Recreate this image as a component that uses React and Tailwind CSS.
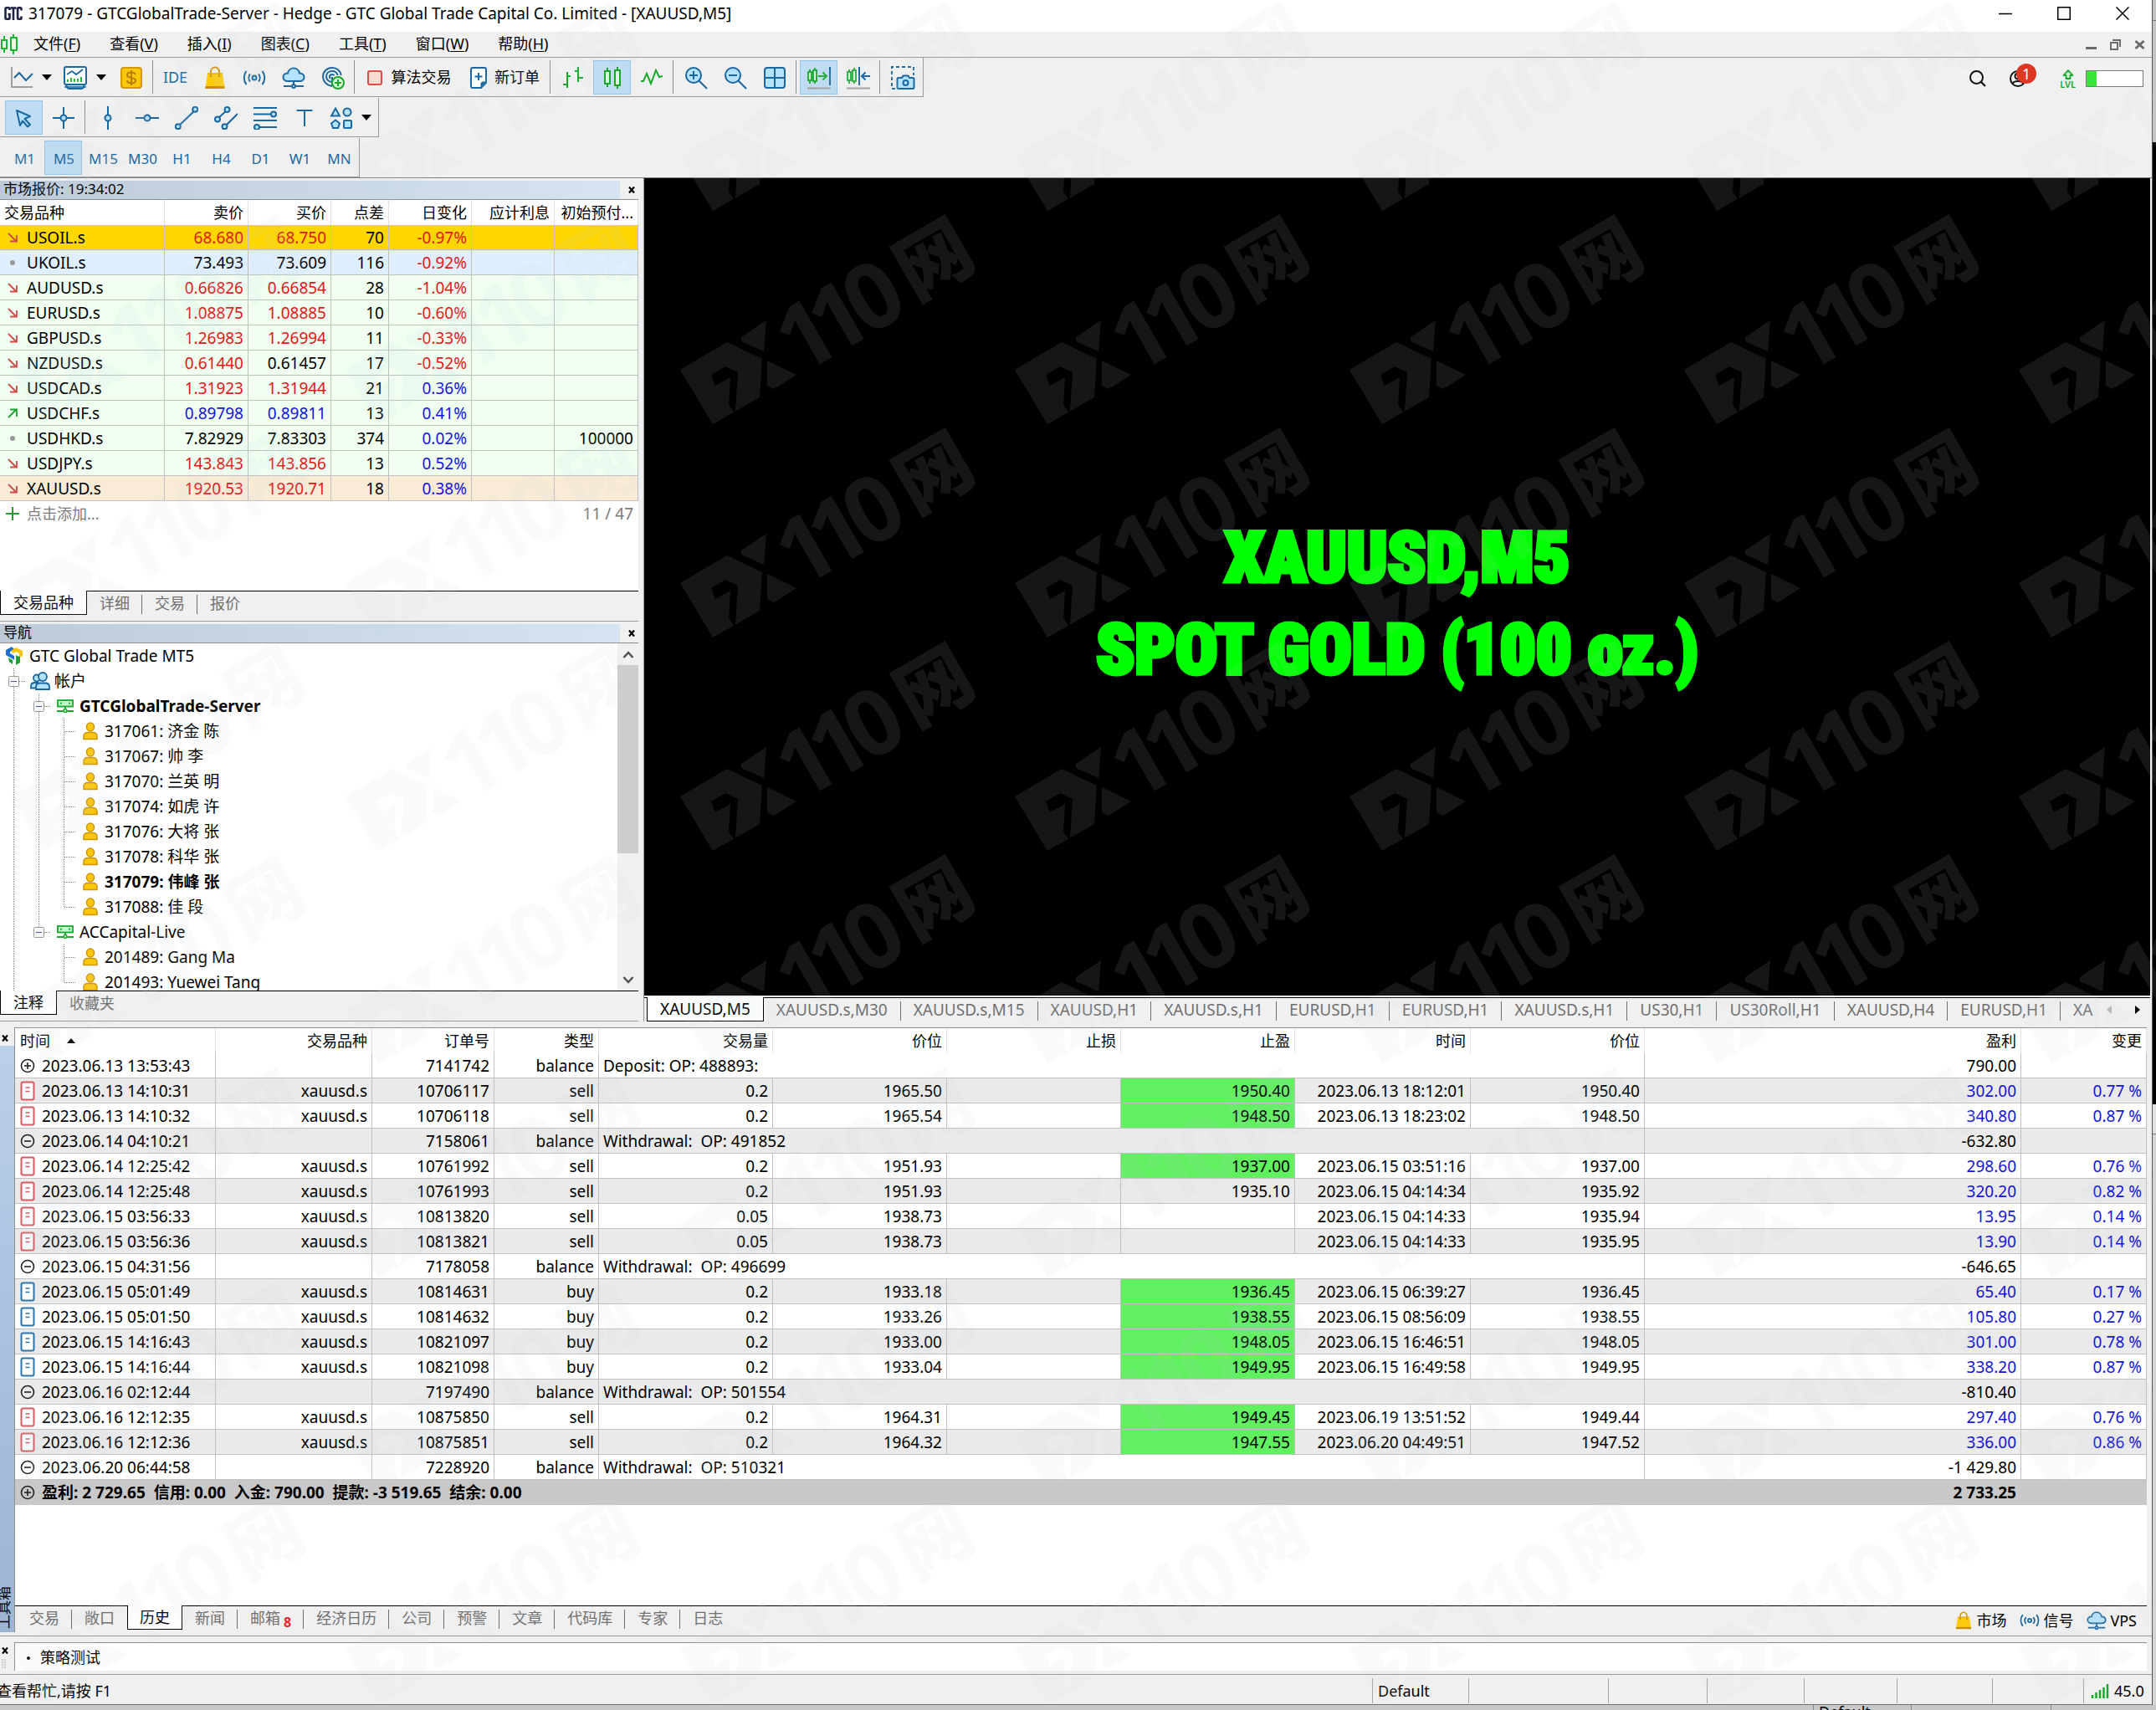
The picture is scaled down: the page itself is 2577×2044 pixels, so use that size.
import React from "react";

const BLUE = "#1b679f";
const SKY = "#b5e2ff";
const GREEN = "#17a82b";

/* ---------- icons ---------- */

function Svg({ w = 28, h = 28, children, className = "" }) {
  return (
    <svg width={w} height={h} viewBox={`0 0 ${w} ${h}`} fill="none" className={`shrink-0 ${className}`} aria-hidden="true">
      {children}
    </svg>
  );
}

const CaretDown = () => (
  <Svg w={12} h={7}><path d="M0 0h12L6 7z" fill="#000" /></Svg>
);

const LineChartIcon = () => (
  <Svg>
    <path d="M2 1v24h25" stroke="#a0a0a0" strokeWidth="2" />
    <path d="M5 14l6-6 8 9 8-8" stroke={BLUE} strokeWidth="2" />
  </Svg>
);

const IndicatorIcon = () => (
  <Svg w={30} h={30}>
    <path d="M3 20l2 6c.5 1.500 1.500 2 3 2h14c1.500 0 2.500-.5 3-2l2-6z" fill={SKY} stroke={BLUE} strokeWidth="2" />
    <rect x="2" y="2" width="26" height="21" rx="2" fill="#fff" stroke={BLUE} strokeWidth="2" />
    <path d="M2 26h26" stroke={BLUE} strokeWidth="1.500" />
    <path d="M5 11l6-4 5 4 8-6" stroke={BLUE} strokeWidth="1.800" />
    <path d="M6 20v-3M10 20v-5M14 20v-4M18 20v-4M22 20v-6" stroke={GREEN} strokeWidth="1.800" />
  </Svg>
);

const DollarIcon = () => (
  <Svg>
    <rect x="2" y="2" width="24" height="24" rx="3" fill="#fbc70b" stroke="#d39a08" strokeWidth="2" />
    <path d="M14 5v18M19 10c-1-2-3-2.500-5-2.500-3 0-5 1-5 3.200 0 4.600 10 2 10 6.600 0 2.200-2 3.200-5 3.200-2.500 0-4.500-1-5.500-3" stroke="#b97d06" strokeWidth="2" />
  </Svg>
);

const BagIcon = ({ w = 28, h = 28 }) => (
  <svg width={w} height={h} viewBox="0 0 28 28" fill="none" aria-hidden="true" className="shrink-0">
    <path d="M5 9h18l2.500 17h-23z" fill="#fccb0a" />
    <path d="M2.500 24h23v3h-23z" fill="#c98c05" />
    <path d="M9 13V7c0-3 2-5.500 5-5.500S19 4 19 7v6" stroke="#cf9408" strokeWidth="2" />
    <path d="M5 9h18" stroke="#e0a90a" strokeWidth="1.500" />
  </svg>
);

const SignalIcon = ({ w = 28, h = 28 }) => (
  <svg width={w} height={h} viewBox="0 0 28 28" fill="none" aria-hidden="true" className="shrink-0" stroke={BLUE} strokeWidth="2">
    <circle cx="14" cy="14" r="2.500" fill={SKY} />
    <path d="M9 9.500c-2.200 2.600-2.200 6.400 0 9M19 9.500c2.200 2.600 2.200 6.400 0 9" />
    <path d="M4.500 6C.8 10.500.8 17.500 4.500 22M23.500 6c3.700 4.500 3.700 11.500 0 16" />
  </svg>
);

const CloudIcon = ({ w = 28, h = 28 }) => (
  <svg width={w} height={h} viewBox="0 0 28 28" fill="none" aria-hidden="true" className="shrink-0" stroke={BLUE} strokeWidth="2">
    <path d="M7 18c-3 0-5.500-2-5.500-4.800C1.500 10.500 4 8.500 7 8.500 7.500 5 10.500 2.500 14 2.500S20.500 5 21 8.500c3 0 5.500 2 5.500 4.700 0 2.800-2.500 4.800-5.500 4.800z" fill={SKY} />
    <path d="M14 18v4M2 24h9M17 24h9" />
    <circle cx="14" cy="24" r="2" fill={SKY} />
  </svg>
);

const CopyTradeIcon = () => (
  <Svg>
    <g stroke={BLUE} strokeWidth="2">
      <path d="M13 24C6 23 2 18 2 12.500 2 6.500 7 2 13 2c5.500 0 10 3.800 10.800 9" />
      <path d="M12 19c-3.500-.8-6-3.500-6-6.700C6 8.500 9 6 13 6c3 0 5.800 1.800 6.700 5" />
      <path d="M11 15c-.7-.6-1-1.400-1-2.500C10 11 11.300 10 13 10c1 0 2 .5 2.500 1.300" />
      <path d="M13 13v11" />
    </g>
    <circle cx="20" cy="20" r="7" fill="#d6fbd6" stroke={GREEN} strokeWidth="2" />
    <path d="M20 16v8M16 20h8" stroke={GREEN} strokeWidth="2" />
  </Svg>
);

const StopSquareIcon = () => (
  <Svg w={18} h={18}>
    <rect x="1" y="1" width="16" height="16" rx="2" fill="#fbd9d2" stroke="#d94d4f" strokeWidth="2" />
  </Svg>
);

const NewOrderIcon = () => (
  <Svg w={22} h={28}>
    <path d="M4 2h14c1 0 2 1 2 2v16l-6 6H4c-1 0-2-1-2-2V4c0-1 1-2 2-2z" fill="#fff" stroke={BLUE} strokeWidth="2" />
    <path d="M20 19l-6 7v-5c0-1 1-2 2-2z" fill={BLUE} stroke={BLUE} />
    <path d="M11 8v9M6.500 12.500h9" stroke={BLUE} strokeWidth="2" />
  </Svg>
);

const BarChartIcon = () => (
  <Svg>
    <path d="M7 7v19M2 22h5M7 12h4M20 1v18M16 6h4M20 14h6" stroke={GREEN} strokeWidth="2" />
  </Svg>
);

const CandlesIcon = () => (
  <Svg>
    <g stroke={GREEN} strokeWidth="2" fill="#d9fbe0">
      <path d="M8 2v4M8 21v4M20 1v4M20 23v4" />
      <rect x="5" y="6" width="6" height="15" />
      <rect x="17" y="5" width="6" height="18" />
    </g>
  </Svg>
);

const ZigzagIcon = () => (
  <Svg><path d="M1 18h3l4-9 5 12 6-16 4 8 4-1" stroke={GREEN} strokeWidth="2" /></Svg>
);

const ZoomIcon = ({ plus }) => (
  <Svg>
    <circle cx="11" cy="11" r="9" fill={SKY} stroke={BLUE} strokeWidth="2" />
    <path d="M17.500 17.500L27 27M6 11h10" stroke={BLUE} strokeWidth="2" />
    {plus && <path d="M11 6v10" stroke={BLUE} strokeWidth="2" />}
  </Svg>
);

const TileIcon = () => (
  <Svg>
    <rect x="2" y="2" width="24" height="24" rx="3" fill={SKY} stroke={BLUE} strokeWidth="2" />
    <path d="M14 2v24M2 14h24" stroke={BLUE} strokeWidth="2" />
  </Svg>
);

const SmallCandles = () => (
  <g stroke={GREEN} strokeWidth="1.800" fill="#d9fbe0">
    <path d="M4 4v3M4 17v4M10 2v3M10 18v3" />
    <rect x="2" y="7" width="4" height="10" />
    <rect x="8" y="5" width="4" height="13" />
  </g>
);

const AutoScrollIcon = () => (
  <Svg w={30}>
    <SmallCandles />
    <path d="M14 12h10M19.500 7.500L24 12l-4.500 4.500" stroke={GREEN} strokeWidth="2" />
    <path d="M28 1v22" stroke={BLUE} strokeWidth="2" />
    <path d="M1 26.500h28" stroke="#a0a0a0" strokeWidth="2" />
  </Svg>
);

const ChartShiftIcon = () => (
  <Svg w={30}>
    <SmallCandles />
    <path d="M16 1v22M19 12h10M23.500 7.500L19 12l4.500 4.500" stroke={BLUE} strokeWidth="2" />
    <path d="M1 26.500h28" stroke="#a0a0a0" strokeWidth="2" />
  </Svg>
);

const CameraIcon = () => (
  <Svg w={30} h={30}>
    <path d="M6 28H2V2h26v10" stroke={BLUE} strokeWidth="2" strokeDasharray="4 3" />
    <path d="M10 15h4l1.500-2.500h6L23 15h4c1 0 1.500.5 1.500 1.500v10c0 1-.5 1.500-1.500 1.500H10c-1 0-1.500-.5-1.500-1.500v-10c0-1 .5-1.500 1.500-1.500z" fill={SKY} stroke={BLUE} strokeWidth="2" />
    <circle cx="18.500" cy="21" r="3" fill={SKY} stroke={BLUE} strokeWidth="2" />
  </Svg>
);

const CursorIcon = () => (
  <Svg>
    <path d="M5 5l16 7-6.500 3 6.500 7-3 2.500-6-7-3 5.500z" fill={SKY} stroke={BLUE} strokeWidth="2" strokeLinejoin="round" />
  </Svg>
);

const CrosshairIcon = () => (
  <Svg>
    <path d="M14 1v26M1 14h26" stroke={BLUE} strokeWidth="2" />
    <circle cx="14" cy="14" r="3.500" fill={SKY} stroke={BLUE} strokeWidth="2" />
  </Svg>
);

const VLineIcon = () => (
  <Svg>
    <path d="M14 0v28" stroke={BLUE} strokeWidth="2" />
    <circle cx="14" cy="14" r="3.500" fill={SKY} stroke={BLUE} strokeWidth="2" />
  </Svg>
);

const HLineIcon = () => (
  <Svg>
    <path d="M0 14h28" stroke={BLUE} strokeWidth="2" />
    <circle cx="14" cy="14" r="3.500" fill={SKY} stroke={BLUE} strokeWidth="2" />
  </Svg>
);

const TrendIcon = () => (
  <Svg>
    <path d="M4 24L25 4" stroke={BLUE} strokeWidth="2" />
    <circle cx="3.800" cy="24.200" r="3" fill={SKY} stroke={BLUE} strokeWidth="2" />
    <circle cx="24.200" cy="3.800" r="3" fill={SKY} stroke={BLUE} strokeWidth="2" />
  </Svg>
);

const ChannelIcon = () => (
  <Svg>
    <path d="M4 15L16 4M13 24L28 9" stroke={BLUE} strokeWidth="2" />
    <g fill={SKY} stroke={BLUE} strokeWidth="2">
      <circle cx="4" cy="15.500" r="3" />
      <circle cx="15.500" cy="4" r="3" />
      <circle cx="12.500" cy="24.200" r="3" />
    </g>
  </Svg>
);

const FiboIcon = () => (
  <Svg w={30}>
    <path d="M1 2h28M1 9.500h28M1 17h28M1 25h28" stroke={BLUE} strokeWidth="2" />
    <circle cx="25" cy="9.500" r="3" fill={SKY} stroke={BLUE} strokeWidth="2" />
    <circle cx="5" cy="25" r="3" fill={SKY} stroke={BLUE} strokeWidth="2" />
  </Svg>
);

const TextToolIcon = () => (
  <Svg><path d="M4.500 5h19M14 5v19" stroke={BLUE} strokeWidth="2" /></Svg>
);

const ShapesIcon = () => (
  <Svg>
    <g fill={SKY} stroke={BLUE} strokeWidth="2">
      <path d="M7 2.500L12 11.500H2z" />
      <circle cx="21" cy="7" r="4.500" />
      <path d="M7 16.500l5 4-2 5.500H4l-2-5.500z" />
      <rect x="17" y="17" width="9" height="9" rx="1" />
    </g>
  </Svg>
);

const TrendArrow = ({ dir }) => {
  if (dir === "flat") return <Svg w={12} h={12}><circle cx="6" cy="6" r="3" fill="#9a9a9a" /></Svg>;
  const up = dir === "up";
  return (
    <Svg w={12} h={12}>
      <path
        d={up ? "M1 11L10 2M3 1.500h8V10" : "M1 1L10 10M3 10.500h8V3"}
        stroke={up ? "#1da02f" : "#cf4a4a"}
        strokeWidth="1.800"
      />
    </Svg>
  );
};

const CloseGlyph = ({ size = 8 }) => (
  <svg width={size} height={size} viewBox="0 0 8 8" aria-hidden="true" className="shrink-0">
    <path d="M1 0.500L7 7.500M7 0.500L1 7.500" stroke="#000" strokeWidth="2.200" />
  </svg>
);

const PersonIcon = () => (
  <Svg w={18} h={22}>
    <ellipse cx="9" cy="6" rx="4.500" ry="5" fill="#fbc70b" stroke="#cf9408" strokeWidth="1.500" />
    <path d="M1 20.500v-3c0-3 2-5 5-5h6c3 0 5 2 5 5v3z" fill="#fbc70b" stroke="#cf9408" strokeWidth="1.500" />
  </Svg>
);

const PeopleIcon = () => (
  <Svg w={24} h={22}>
    <g fill={SKY} stroke={BLUE} strokeWidth="1.800">
      <circle cx="8" cy="7.500" r="4" />
      <path d="M1 19.500v-2c0-3 2-4.500 4.500-4.500H9v6.500z" />
      <ellipse cx="15" cy="6" rx="5" ry="5" />
      <path d="M7 21v-3c0-3 2-4.500 5-4.500h6c3 0 5 1.500 5 4.500v3z" />
    </g>
  </Svg>
);

const ServerIcon = () => (
  <Svg w={20} h={16}>
    <rect x="1" y="1" width="18" height="7.500" fill="#c4f7c9" stroke={GREEN} strokeWidth="1.800" />
    <path d="M4 4.700h2M14 4.700h2M10 8.500v4M0 14h7.500M12.500 14H20" stroke={GREEN} strokeWidth="1.800" />
    <circle cx="10" cy="13.500" r="2" fill="#c4f7c9" stroke={GREEN} strokeWidth="1.500" />
  </Svg>
);

const TerminalLogo = () => (
  <Svg w={22} h={22}>
    <path d="M7 0L0 4v6l7 4 3 2V11L5 8V6l5-3z" fill="#1c6fd0" />
    <path d="M12 1l8 4v6l-4 2V8l-4-2-3 2-3-3z" fill="#f5c400" />
    <path d="M12 10l4 2 1-1v8l-5 3z" fill="#1f9f35" />
    <path d="M3 13l5 3v5l-4-3z" fill="#1f9f35" />
  </Svg>
);

const RowIcon = ({ kind }) => {
  if (kind === "plus" || kind === "minus")
    return (
      <Svg w={18} h={18}>
        <circle cx="9" cy="9" r="7.500" stroke="#222" strokeWidth="1.600" />
        <path d="M5 9h8" stroke="#222" strokeWidth="1.600" />
        {kind === "plus" && <path d="M9 5v8" stroke="#222" strokeWidth="1.600" />}
      </Svg>
    );
  const c = kind === "sell" ? "#d65a60" : "#2b75ad";
  return (
    <Svg w={18} h={24}>
      <rect x="1.500" y="1.500" width="15" height="21" rx="2" fill="#fff" stroke={c} strokeWidth="2" />
      <path d="M6.500 8h5M6.500 12.500h5" stroke={c} strokeWidth="1.600" />
    </Svg>
  );
};

/* ---------- small building blocks ---------- */

const Sep = () => <span className="ml-px mr-0.5 h-10 w-px shrink-0 bg-[#8e8e8e]" />;

function Tool({ label, active, className = "w-[45px]", children }) {
  return (
    <button
      type="button"
      aria-label={label}
      aria-pressed={active ? true : undefined}
      className={`flex h-[41px] shrink-0 items-center justify-center border pt-px ${active ? "border-[#95c5e8] bg-[#bfdcf2]" : "border-transparent"} ${className}`}
    >
      {children}
    </button>
  );
}

function Toolbar({ label, children }) {
  return (
    <div className="flex h-12 items-start">
      <div role="toolbar" aria-label={label} className="flex h-[47px] items-center gap-0.5 border-r border-b border-[#9a9a9a] pr-0.5 pl-[6px]">
        {children}
      </div>
    </div>
  );
}

function PanelTitle({ children }) {
  return (
    <div className="flex h-[23px] items-stretch border-b border-[#8f8f8f]">
      <h2 className="flex-1 bg-linear-to-r from-[#bdcbd9] to-[#d6e4f2] pl-1 text-[17px] leading-5 font-normal">{children}</h2>
      <button type="button" aria-label="关闭" className="flex w-[22px] items-center justify-center pl-1.5">
        <CloseGlyph />
      </button>
    </div>
  );
}

function TabStrip({ tabs, active, children, className = "h-8 text-[18px]", activePad = "px-[15px]", pad = "px-[15px]" }) {
  return (
    <div role="tablist" className={`flex items-start border-t border-black ${className}`}>
      {tabs.map((t, i) => {
        const on = i === active;
        const divider = !on && i !== active - 1 && i !== tabs.length - 1;
        return (
          <button
            key={i}
            type="button"
            role="tab"
            aria-selected={on}
            className={
              on
                ? `-mt-px h-[29px] shrink-0 border-r border-b border-l border-black bg-white leading-[26px] whitespace-nowrap ${activePad}`
                : "flex h-[27px] shrink-0 items-center leading-[26px] whitespace-nowrap text-[#707070]"
            }
          >
            {on ? t : (
              <>
                <span className={pad}>{t}</span>
                <span className={`mt-1 h-[23px] w-px ${divider ? "bg-[#6e6e6e]" : "bg-transparent"}`} />
              </>
            )}
          </button>
        );
      })}
      {children}
    </div>
  );
}

/* ---------- market watch ---------- */

const R = "text-[#e01818]";
const B = "text-[#1414dc]";
const K = "text-black";

const quotes = [
  ["down", "USOIL.s", "68.680", R, "68.750", R, "70", "-0.97%", R, "", "bg-[#ffd700]"],
  ["flat", "UKOIL.s", "73.493", K, "73.609", K, "116", "-0.92%", R, "", "bg-[#e0efff]"],
  ["down", "AUDUSD.s", "0.66826", R, "0.66854", R, "28", "-1.04%", R, "", "bg-[#f0fff0]"],
  ["down", "EURUSD.s", "1.08875", R, "1.08885", R, "10", "-0.60%", R, "", "bg-[#f0fff0]"],
  ["down", "GBPUSD.s", "1.26983", R, "1.26994", R, "11", "-0.33%", R, "", "bg-[#f0fff0]"],
  ["down", "NZDUSD.s", "0.61440", R, "0.61457", K, "17", "-0.52%", R, "", "bg-[#f0fff0]"],
  ["down", "USDCAD.s", "1.31923", R, "1.31944", R, "21", "0.36%", B, "", "bg-[#f0fff0]"],
  ["up", "USDCHF.s", "0.89798", B, "0.89811", B, "13", "0.41%", B, "", "bg-[#f0fff0]"],
  ["flat", "USDHKD.s", "7.82929", K, "7.83303", K, "374", "0.02%", B, "100000", "bg-[#f0fff0]"],
  ["down", "USDJPY.s", "143.843", R, "143.856", R, "13", "0.52%", B, "", "bg-[#f0fff0]"],
  ["down", "XAUUSD.s", "1920.53", R, "1920.71", R, "18", "0.38%", B, "", "bg-[#faebd7]"],
];

const qCell = "h-[30px] border-r border-b border-[#c0c0c0] pr-[5px] text-right leading-7";
const qHead = "h-[30px] border-r border-[#e2e2e2] pr-[5px] text-right text-[18px] leading-7 font-normal whitespace-nowrap";

function MarketWatch() {
  return (
    <section className="border-b border-[#9a9a9a] pt-[3px] pb-1">
      <PanelTitle>市场报价: 19:34:02</PanelTitle>
      <div className="h-[467px] bg-white">
        <table className="w-full table-fixed border-separate border-spacing-0">
          <colgroup>
            <col />
            <col className="w-[100px]" />
            <col className="w-[99px]" />
            <col className="w-[69px]" />
            <col className="w-[99px]" />
            <col className="w-[99px]" />
            <col className="w-[100px]" />
          </colgroup>
          <thead>
            <tr>
              <th className="h-[30px] border-r border-[#e2e2e2] pl-[5px] text-left text-[18px] leading-7 font-normal">交易品种</th>
              {["卖价", "买价", "点差", "日变化", "应计利息", "初始预付..."].map((h) => (
                <th key={h} className={qHead}>{h}</th>
              ))}
            </tr>
          </thead>
          <tbody>
            {quotes.map(([dir, sym, bid, bc, ask, ac, sp, ch, cc, m, bg]) => (
              <tr key={sym} className={bg}>
                <td className="h-[30px] border-r border-b border-[#c0c0c0] pl-[9px] leading-7">
                  <span className="flex items-center gap-[11px]"><TrendArrow dir={dir} /><span>{sym}</span></span>
                </td>
                <td className={`${qCell} ${bc}`}>{bid}</td>
                <td className={`${qCell} ${ac}`}>{ask}</td>
                <td className={qCell}>{sp}</td>
                <td className={`${qCell} ${cc}`}>{ch}</td>
                <td className={qCell} />
                <td className={qCell}>{m}</td>
              </tr>
            ))}
          </tbody>
        </table>
        <div className="flex h-[30px] items-center justify-between pr-1.5 pl-[6px] text-[#7a7a7a]">
          <button type="button" className="flex items-center gap-2 text-[18px]">
            <Svg w={18} h={18}><path d="M9 1v16M1 9h16" stroke="#1da02f" strokeWidth="2" /></Svg>
            点击添加...
          </button>
          <span>11 / 47</span>
        </div>
      </div>
      <TabStrip tabs={["交易品种", "详细", "交易", "报价"]} active={0} pad="pr-[14px] pl-[15px]" />
    </section>
  );
}

/* ---------- navigator ---------- */

function Guide({ type }) {
  const dot = { stroke: "#808080", strokeWidth: 1, strokeDasharray: "1 1" };
  return (
    <Svg w={30} h={30}>
      {"vte".includes(type) && <path d="M15.500 0v30" {...dot} />}
      {"te".includes(type) && <path d="M16 15.500h15" {...dot} />}
      {"lb".includes(type) && <path d="M15.500 0v15M16 15.500h15" {...dot} />}
      {(type === "e" || type === "b") && (
        <>
          <rect x="9.500" y="9.500" width="12" height="12" rx="1" fill="#f6f6f6" stroke="#9a9a9a" />
          <path d="M12 15.500h7" stroke="#44589c" />
        </>
      )}
    </Svg>
  );
}

const tree = [
  ["ve", <ServerIcon />, "GTCGlobalTrade-Server", true],
  ["vvt", <PersonIcon />, "317061: 济金 陈"],
  ["vvt", <PersonIcon />, "317067: 帅 李"],
  ["vvt", <PersonIcon />, "317070: 兰英 明"],
  ["vvt", <PersonIcon />, "317074: 如虎 许"],
  ["vvt", <PersonIcon />, "317076: 大将 张"],
  ["vvt", <PersonIcon />, "317078: 科华 张"],
  ["vvt", <PersonIcon />, "317079: 伟峰 张", true],
  ["vvl", <PersonIcon />, "317088: 佳 段"],
  ["vb", <ServerIcon />, "ACCapital-Live"],
  ["v t", <PersonIcon />, "201489: Gang Ma"],
  ["v l", <PersonIcon />, "201493: Yuewei Tang"],
];

function TreeRow({ guides, icon, label, bold }) {
  return (
    <li className={`flex h-[30px] items-center pl-px whitespace-nowrap ${bold ? "font-bold" : ""}`}>
      {guides.split("").map((g, i) => <Guide key={i} type={g} />)}
      <span className="flex w-[34px] shrink-0 justify-center">{icon}</span>
      <span>{label}</span>
    </li>
  );
}

function Navigator() {
  return (
    <section className="border-b border-[#9a9a9a] pt-[3px] pb-1">
      <PanelTitle>导航</PanelTitle>
      <div className="flex h-[415px] bg-white">
        <ul className="flex-1 overflow-hidden">
          <TreeRow guides="" icon={<TerminalLogo />} label="GTC Global Trade MT5" />
          <TreeRow guides="e" icon={<PeopleIcon />} label="帐户" />
          {tree.map(([g, icon, label, bold]) => (
            <TreeRow key={label} guides={g} icon={icon} label={label} bold={bold} />
          ))}
        </ul>
        <div className="flex w-[25px] flex-col items-center bg-[#f0f0f0]">
          <button type="button" aria-label="向上滚动" className="flex h-[26px] w-full items-center justify-center">
            <Svg w={14} h={9}><path d="M1.500 8L7 2l5.500 6" stroke="#505050" strokeWidth="2.500" /></Svg>
          </button>
          <div className="h-[225px] w-full bg-[#cdcdcd]" />
          <button type="button" aria-label="向下滚动" className="mt-auto flex h-[26px] w-full items-center justify-center">
            <Svg w={14} h={9}><path d="M1.500 1L7 7l5.500-6" stroke="#505050" strokeWidth="2.500" /></Svg>
          </button>
        </div>
      </div>
      <TabStrip tabs={["注释", "收藏夹"]} active={0} />
    </section>
  );
}

/* ---------- history ---------- */

const history = [
  ["plus", "2023.06.13 13:53:43", "7141742", "Deposit: OP: 488893:", "790.00"],
  ["sell", "2023.06.13 14:10:31", "10706117", "0.2", "1965.50", "1950.40", 1, "2023.06.13 18:12:01", "1950.40", "302.00", "0.77 %"],
  ["sell", "2023.06.13 14:10:32", "10706118", "0.2", "1965.54", "1948.50", 1, "2023.06.13 18:23:02", "1948.50", "340.80", "0.87 %"],
  ["minus", "2023.06.14 04:10:21", "7158061", "Withdrawal:  OP: 491852", "-632.80"],
  ["sell", "2023.06.14 12:25:42", "10761992", "0.2", "1951.93", "1937.00", 1, "2023.06.15 03:51:16", "1937.00", "298.60", "0.76 %"],
  ["sell", "2023.06.14 12:25:48", "10761993", "0.2", "1951.93", "1935.10", 0, "2023.06.15 04:14:34", "1935.92", "320.20", "0.82 %"],
  ["sell", "2023.06.15 03:56:33", "10813820", "0.05", "1938.73", "", 0, "2023.06.15 04:14:33", "1935.94", "13.95", "0.14 %"],
  ["sell", "2023.06.15 03:56:36", "10813821", "0.05", "1938.73", "", 0, "2023.06.15 04:14:33", "1935.95", "13.90", "0.14 %"],
  ["minus", "2023.06.15 04:31:56", "7178058", "Withdrawal:  OP: 496699", "-646.65"],
  ["buy", "2023.06.15 05:01:49", "10814631", "0.2", "1933.18", "1936.45", 1, "2023.06.15 06:39:27", "1936.45", "65.40", "0.17 %"],
  ["buy", "2023.06.15 05:01:50", "10814632", "0.2", "1933.26", "1938.55", 1, "2023.06.15 08:56:09", "1938.55", "105.80", "0.27 %"],
  ["buy", "2023.06.15 14:16:43", "10821097", "0.2", "1933.00", "1948.05", 1, "2023.06.15 16:46:51", "1948.05", "301.00", "0.78 %"],
  ["buy", "2023.06.15 14:16:44", "10821098", "0.2", "1933.04", "1949.95", 1, "2023.06.15 16:49:58", "1949.95", "338.20", "0.87 %"],
  ["minus", "2023.06.16 02:12:44", "7197490", "Withdrawal:  OP: 501554", "-810.40"],
  ["sell", "2023.06.16 12:12:35", "10875850", "0.2", "1964.31", "1949.45", 1, "2023.06.19 13:51:52", "1949.44", "297.40", "0.76 %"],
  ["sell", "2023.06.16 12:12:36", "10875851", "0.2", "1964.32", "1947.55", 1, "2023.06.20 04:49:51", "1947.52", "336.00", "0.86 %"],
  ["minus", "2023.06.20 06:44:58", "7228920", "Withdrawal:  OP: 510321", "-1 429.80"],
];

const hCell = "h-[30px] border-r border-b border-[#c0c0c0] pr-[5px] text-right leading-7 whitespace-nowrap";
const hHead = "h-[30px] border-r border-[#e2e2e2] pr-[5px] text-right text-[18px] leading-7 font-normal";

function TimeCell({ kind, time }) {
  return (
    <td className="h-[30px] border-r border-b border-[#c0c0c0] pl-[6px] leading-7 whitespace-nowrap">
      <span className="flex items-center gap-2"><RowIcon kind={kind} /><span>{time}</span></span>
    </td>
  );
}

function HistoryTable() {
  return (
    <table className="w-full table-fixed border-separate border-spacing-0">
      <colgroup>
        <col className="w-[240px]" />
        <col className="w-[187px]" />
        <col className="w-[146px]" />
        <col className="w-[125px]" />
        <col className="w-[208px]" />
        <col className="w-[208px]" />
        <col className="w-[208px]" />
        <col className="w-[208px]" />
        <col className="w-[210px]" />
        <col className="w-[208px]" />
        <col />
        <col className="w-[150px]" />
      </colgroup>
      <thead>
        <tr>
          <th className="h-[30px] border-r border-[#e2e2e2] pl-[6px] text-left text-[18px] leading-7 font-normal">
            <span className="flex items-center gap-5">
              时间
              <Svg w={10} h={6}><path d="M0 6h10L5 0z" fill="#000" /></Svg>
            </span>
          </th>
          {["交易品种", "订单号", "类型", "交易量", "价位", "止损", "止盈", "时间", "价位", "盈利", "变更"].map((h, i) => (
            <th key={i} className={hHead}>{h}</th>
          ))}
        </tr>
      </thead>
      <tbody>
        {history.map((r, i) => {
          const bg = i % 2 ? "bg-[#eaeaea]" : "bg-white";
          if (r.length === 5) {
            const [kind, time, order, note, profit] = r;
            return (
              <tr key={i} className={bg}>
                <TimeCell kind={kind} time={time} />
                <td className={hCell} />
                <td className={hCell}>{order}</td>
                <td className={hCell}>balance</td>
                <td colSpan={6} className="h-[30px] border-r border-b border-[#c0c0c0] pl-[5px] leading-7 whitespace-pre">{note}</td>
                <td className={hCell}>{profit}</td>
                <td className={hCell} />
              </tr>
            );
          }
          const [kind, time, order, vol, price, tp, hit, closeTime, closePrice, profit, change] = r;
          return (
            <tr key={i} className={bg}>
              <TimeCell kind={kind} time={time} />
              <td className={hCell}>xauusd.s</td>
              <td className={hCell}>{order}</td>
              <td className={hCell}>{kind}</td>
              <td className={hCell}>{vol}</td>
              <td className={hCell}>{price}</td>
              <td className={hCell} />
              <td className={`${hCell} ${hit ? "bg-[#60f060]" : ""}`}>{tp}</td>
              <td className={hCell}>{closeTime}</td>
              <td className={hCell}>{closePrice}</td>
              <td className={`${hCell} ${B}`}>{profit}</td>
              <td className={`${hCell} ${B}`}>{change}</td>
            </tr>
          );
        })}
        <tr className="bg-[#c8c8c8] font-bold">
          <td colSpan={10} className="h-[30px] pl-[6px] leading-7 whitespace-pre">
            <span className="flex items-center gap-2">
              <RowIcon kind="plus" />
              <span>{"盈利: 2 729.65  信用: 0.00  入金: 790.00  提款: -3 519.65  结余: 0.00"}</span>
            </span>
          </td>
          <td className="pr-[6px] text-right">2 733.25</td>
          <td />
        </tr>
      </tbody>
    </table>
  );
}

function Toolbox() {
  return (
    <section className="flex min-h-0 flex-1 border-b border-[#9a9a9a] pt-[7px] pb-1">
      <div className="flex w-[17px] shrink-0 flex-col">
        <button type="button" aria-label="关闭" className="flex h-[22px] items-center pt-1 pl-[2px]"><CloseGlyph /></button>
        <div className="flex flex-1 flex-col justify-end overflow-hidden bg-linear-to-b from-[#bacfea] to-[#9bb5d3] pb-1">
          <span className="-ml-1 w-[17px] rotate-180 text-[17px] leading-[17px] [text-orientation:sideways] [writing-mode:vertical-rl]">工具箱</span>
        </div>
      </div>
      <div className="mr-1.5 flex min-w-0 flex-1 flex-col border-t border-l border-[#8f8f8f]">
        <div className="flex-1 overflow-hidden bg-white"><HistoryTable /></div>
        <TabStrip
          active={2}
          className="h-8 pl-0.5 text-[18px]"
          activePad="px-[14px]"
          pad="pr-[14px] pl-[15px]"
          tabs={[
            "交易", "敞口", "历史", "新闻",
            <>邮箱<span className="relative top-1 ml-1 text-base font-bold text-[#e81e2c]">8</span></>,
            "经济日历", "公司", "预警", "文章", "代码库", "专家", "日志",
          ]}
        >
          <div className="mr-3 ml-auto flex h-[34px] items-center gap-4 text-[18px]">
            <button type="button" className="flex items-center gap-1"><BagIcon w={22} h={22} />市场</button>
            <button type="button" className="flex items-center gap-1"><SignalIcon w={24} h={24} />信号</button>
            <button type="button" className="flex items-center gap-1"><CloudIcon w={24} h={24} />VPS</button>
          </div>
        </TabStrip>
      </div>
    </section>
  );
}

/* ---------- top of the window ---------- */

function TitleBar() {
  return (
    <header className="flex h-[38px] shrink-0 items-center bg-white pb-1.5 pl-[5px]">
      <svg width="22" height="16" viewBox="0 0 22 16" fill="none" stroke="#1d2340" strokeWidth="2.600" aria-label="GTC" role="img">
        <path d="M6.500 4V2.500c0-.7-.5-1.200-1.200-1.200H2.700c-.7 0-1.200.5-1.200 1.200v11c0 .7.5 1.200 1.200 1.200h2.600c.7 0 1.200-.5 1.200-1.200V9H4.500" />
        <path d="M7.500 1.500h7M11 1.500V16" />
        <path d="M20.500 4.500v-2c0-.7-.5-1.200-1.200-1.200h-2c-.7 0-1.200.5-1.200 1.200v11c0 .7.5 1.200 1.200 1.200h2c.7 0 1.200-.5 1.200-1.200v-2" />
      </svg>
      <h1 className="ml-[7px] text-[19px] font-normal whitespace-nowrap">
        317079 - GTCGlobalTrade-Server - Hedge - GTC Global Trade Capital Co. Limited - [XAUUSD,M5]
      </h1>
      <div className="ml-auto flex">
        <button type="button" aria-label="最小化" className="flex w-[70px] justify-center">
          <Svg w={16} h={16}><path d="M0 8.500h16" stroke="#000" strokeWidth="1.500" /></Svg>
        </button>
        <button type="button" aria-label="最大化" className="flex w-[70px] justify-center">
          <Svg w={16} h={16}><rect x="0.750" y="0.750" width="14.500" height="14.500" stroke="#000" strokeWidth="1.500" /></Svg>
        </button>
        <button type="button" aria-label="关闭窗口" className="flex w-[70px] justify-center">
          <Svg w={16} h={16}><path d="M0.500 0.500l15 15M15.500 0.500l-15 15" stroke="#000" strokeWidth="1.500" /></Svg>
        </button>
      </div>
    </header>
  );
}

const menus = [["文件", "F"], ["查看", "V"], ["插入", "I"], ["图表", "C"], ["工具", "T"], ["窗口", "W"], ["帮助", "H"]];

function MenuBar() {
  return (
    <nav className="flex h-[31px] shrink-0 items-center gap-px border-b border-[#9a9a9a]">
      <Svg w={22} h={24}>
        <g stroke="#17b52e" strokeWidth="2" fill="#e9fbea">
          <path d="M5 2v5M5 17v5M16 0v4M16 19v5" />
          <rect x="2" y="7" width="6" height="10" />
          <rect x="13" y="4" width="7" height="15" />
        </g>
      </Svg>
      {menus.map(([t, k]) => (
        <button key={k} type="button" className="px-[17px] pb-0.5 text-[18px] leading-[26px] whitespace-nowrap">
          {t}(<span className="underline underline-offset-2">{k}</span>)
        </button>
      ))}
      <div className="mr-2 ml-auto flex items-center gap-4">
        <button type="button" aria-label="最小化图表">
          <Svg w={13} h={13}><path d="M0 10.500h13" stroke="#6b6b6b" strokeWidth="3" /></Svg>
        </button>
        <button type="button" aria-label="还原图表">
          <Svg w={13} h={13}>
            <rect x="1" y="4" width="8" height="8" stroke="#6b6b6b" strokeWidth="2" />
            <path d="M3 1h9v8" stroke="#6b6b6b" strokeWidth="2" />
          </Svg>
        </button>
        <button type="button" aria-label="关闭图表">
          <Svg w={13} h={13}><path d="M1.500 2l10 9M11.500 2l-10 9" stroke="#6b6b6b" strokeWidth="3" /></Svg>
        </button>
      </div>
    </nav>
  );
}

function TopRight() {
  return (
    <div className="mr-[10px] ml-auto flex h-[50px] items-center">
      <button type="button" aria-label="搜索" className="mr-7">
        <Svg w={20} h={20}>
          <circle cx="8.500" cy="8.500" r="7.500" stroke="#111" strokeWidth="2" />
          <path d="M13.500 13.500L19 19" stroke="#111" strokeWidth="2.200" />
        </Svg>
      </button>
      <button type="button" aria-label="帐户, 1 条通知" className="relative mr-10">
        <Svg w={20} h={20}>
          <circle cx="10" cy="10" r="9" stroke="#111" strokeWidth="2" />
          <circle cx="10" cy="7" r="3.500" stroke="#111" strokeWidth="2" />
          <path d="M3.500 16c2-4 11-4 13 0" stroke="#111" strokeWidth="2" />
        </Svg>
        <span className="absolute -top-2 left-2 flex h-6 w-6 items-center justify-center rounded-full bg-[#e03624] text-[18px] leading-6 text-white">1</span>
      </button>
      <div className="mr-3 flex flex-col items-center">
        <Svg w={14} h={12}><path d="M7 1L1.500 7h3v4h5V7h3z" fill="#c4f7c9" stroke={GREEN} strokeWidth="1.800" strokeLinejoin="round" /></Svg>
        <span className="text-[11px] leading-[11px] font-semibold text-[#17a82b]">LVL</span>
      </div>
      <div role="meter" aria-label="LVL" aria-valuenow={18} aria-valuemin={0} aria-valuemax={100} className="h-5 w-[69px] border border-[#7a7a7a] bg-white">
        <div className="h-full w-3 bg-[#3be33b]" />
      </div>
    </div>
  );
}

const frames = ["M1", "M5", "M15", "M30", "H1", "H4", "D1", "W1", "MN"];

function Toolbars() {
  return (
    <div className="flex h-36 shrink-0 items-start border-b border-[#808080]">
      <div>
        <Toolbar label="标准">
          <Tool label="图表" className="w-[62px] gap-2.5"><LineChartIcon /><CaretDown /></Tool>
          <Tool label="指标" className="w-[62px] gap-2.5"><IndicatorIcon /><CaretDown /></Tool>
          <Tool label="交易品种"><DollarIcon /></Tool>
          <Sep />
          <Tool label="IDE"><span className="text-[18px] text-[#1b679f]">IDE</span></Tool>
          <Tool label="市场"><BagIcon /></Tool>
          <Tool label="信号"><SignalIcon /></Tool>
          <Tool label="VPS"><CloudIcon /></Tool>
          <Tool label="跟单"><CopyTradeIcon /></Tool>
          <Sep />
          <Tool label="算法交易" className="w-[122px] gap-[11px] text-[18px]"><StopSquareIcon />算法交易</Tool>
          <Tool label="新订单" className="w-[102px] gap-2 text-[18px]"><NewOrderIcon />新订单</Tool>
          <Sep />
          <Tool label="柱状图"><BarChartIcon /></Tool>
          <Tool label="蜡烛图" active><CandlesIcon /></Tool>
          <Tool label="线图"><ZigzagIcon /></Tool>
          <Sep />
          <Tool label="放大"><ZoomIcon plus /></Tool>
          <Tool label="缩小"><ZoomIcon /></Tool>
          <Tool label="平铺窗口"><TileIcon /></Tool>
          <Sep />
          <Tool label="自动滚动" active><AutoScrollIcon /></Tool>
          <Tool label="图表平移"><ChartShiftIcon /></Tool>
          <Sep />
          <Tool label="截图"><CameraIcon /></Tool>
        </Toolbar>
        <Toolbar label="画线">
          <Tool label="光标" active><CursorIcon /></Tool>
          <Tool label="十字线"><CrosshairIcon /></Tool>
          <Sep />
          <Tool label="垂直线"><VLineIcon /></Tool>
          <Tool label="水平线"><HLineIcon /></Tool>
          <Tool label="趋势线"><TrendIcon /></Tool>
          <Tool label="通道"><ChannelIcon /></Tool>
          <Tool label="斐波那契"><FiboIcon /></Tool>
          <Tool label="文字"><TextToolIcon /></Tool>
          <Tool label="图形" className="w-[62px] gap-2.5"><ShapesIcon /><CaretDown /></Tool>
        </Toolbar>
        <Toolbar label="时间周期">
          {frames.map((f) => (
            <Tool key={f} label={f} active={f === "M5"}><span className="pt-0.5 pl-0.5 text-[17px] text-[#1b679f]">{f}</span></Tool>
          ))}
        </Toolbar>
      </div>
      <TopRight />
    </div>
  );
}

/* ---------- chart ---------- */

const chartTabs = [
  "XAUUSD,M5", "XAUUSD.s,M30", "XAUUSD.s,M15", "XAUUSD,H1", "XAUUSD.s,H1", "EURUSD,H1", "EURUSD,H1",
  "XAUUSD.s,H1", "US30,H1", "US30Roll,H1", "XAUUSD,H4", "EURUSD,H1", "XA",
];

function Chart() {
  return (
    <main className="flex min-w-0 flex-1 flex-col pr-0.5">
      <div className="mb-0.5 flex flex-1 flex-col items-center justify-center bg-black pt-10 text-center font-['Impact','Roboto_Condensed',sans-serif] text-[84px] leading-[110px] font-black text-[#00ff00] [-webkit-text-stroke:5px_#00ff00]">
        <p>XAUUSD,M5</p>
        <p>SPOT GOLD (100 oz.)</p>
      </div>
      <div className="flex border-t border-black pl-[3px]">
        <div className="-mt-px min-w-0 flex-1 overflow-hidden">
          <TabStrip tabs={chartTabs} active={0} className="h-[29px] text-[19px]" />
        </div>
        <div className="flex w-[60px] items-center justify-between pr-3 pl-2">
          <button type="button" aria-label="上一个"><Svg w={6} h={10}><path d="M6 0v10L0 5z" fill="#b5b5b5" /></Svg></button>
          <button type="button" aria-label="下一个"><Svg w={6} h={10}><path d="M0 0v10l6-5z" fill="#000" /></Svg></button>
        </div>
      </div>
    </main>
  );
}

/* ---------- bottom ---------- */

function Tester() {
  return (
    <section className="flex h-[46px] shrink-0 border-b border-[#9a9a9a] pt-[7px] pb-1">
      <div className="flex w-[17px] shrink-0 flex-col items-start gap-1.5 pt-1.5 pl-[2px]">
        <button type="button" aria-label="关闭" className="flex"><CloseGlyph /></button>
        <Svg w={6} h={12}><path d="M0 1h6M0 4h6M0 7h6M0 10h6" stroke="#a8a8a8" strokeDasharray="2 1" /></Svg>
      </div>
      <div className="mr-1.5 flex flex-1 items-center gap-3 border-t border-l border-[#8f8f8f] bg-white pt-0.5 pl-3.5">
        <span className="h-1 w-1 rounded-full bg-black" />
        <span className="text-[18px]">策略测试</span>
      </div>
    </section>
  );
}

function StatusBar() {
  return (
    <footer className="flex h-9 shrink-0 items-center border-b border-[#6f6f6f] pt-[3px] text-[18px]">
      <span className="-ml-1 flex-1">查看帮忙,请按 F1</span>
      <span className="flex h-[30px] w-[115px] items-center border-l border-[#a8a8a8] pl-[6px]">Default</span>
      <span className="h-[30px] w-[167px] border-l border-[#a8a8a8]" />
      <span className="h-[30px] w-[118px] border-l border-[#a8a8a8]" />
      <span className="h-[30px] w-[116px] border-l border-[#a8a8a8]" />
      <span className="h-[30px] w-[111px] border-l border-[#a8a8a8]" />
      <span className="h-[30px] w-[114px] border-l border-[#a8a8a8]" />
      <span className="h-[30px] w-[109px] border-l border-[#a8a8a8]" />
      <span className="flex h-[30px] w-[82px] items-center gap-1.5 border-l border-[#a8a8a8] pl-2">
        <Svg w={22} h={18}><path d="M2 18v-4M6.500 18v-7M11 18v-10M15.500 18V5M20 18V1" stroke={GREEN} strokeWidth="2.500" /></Svg>
        45.0
      </span>
    </footer>
  );
}

/* Repeating translucent brand mark laid over the whole screen. */
function BrandOverlay() {
  return (
    <svg className="pointer-events-none absolute inset-0 h-full w-full" aria-hidden="true">
      <defs>
        <pattern id="brand" width="400" height="255" patternUnits="userSpaceOnUse">
          <g fill="#c3cddc" fillOpacity="0.105">
            <path d="M13 187L69 154L111 174L108 220L52 252ZM50 193L55 206L73 196L71 229L77 238L79 236L82 190L67 183Z" fillRule="evenodd" />
            <path d="M86 148L116 128L113 165L86 153Z" />
            <path d="M117 176L152 193L125 210L117 206Z" />
            <g transform="translate(170 186) rotate(-30)">
              <text x="0" y="0" fontFamily="Open Sans, Noto Sans, sans-serif" fontWeight="700" fontSize="109">
                <tspan x="-17">1</tspan>
                <tspan x="27">1</tspan>
                <tspan x="76">0</tspan>
              </text>
              <text x="147" y="-8" fontFamily="Noto Sans CJK SC, sans-serif" fontWeight="900" fontSize="90">网</text>
            </g>
          </g>
        </pattern>
      </defs>
      <rect width="100%" height="100%" fill="url(#brand)" />
    </svg>
  );
}

export default function App() {
  return (
    <div className="relative flex h-screen min-h-[1700px] flex-col overflow-hidden bg-[#c8c8c8] font-['Noto_Sans','Noto_Sans_CJK_SC',sans-serif] text-[19px] text-black">
      <div className="flex min-h-0 flex-1">
        <div className="flex min-w-0 flex-1 flex-col border-r border-[#555] bg-[#f0f0f0]">
          <TitleBar />
          <MenuBar />
          <Toolbars />
          <div className="flex shrink-0">
            <aside className="w-[770px] shrink-0 border-r border-[#9a9a9a] pr-[6px]">
              <MarketWatch />
              <Navigator />
            </aside>
            <Chart />
          </div>
          <Toolbox />
          <Tester />
          <StatusBar />
        </div>
        <div className="flex w-1 shrink-0 flex-col">
          <div className="h-[25px] border-b border-[#777] bg-[#c4c4c4]" />
          <div className="h-[145px] bg-[#c4c4c4]" />
          <div className="h-[1150px] bg-black" />
          <div className="h-9 border-b border-[#777] bg-[#e0e0e0]" />
          <div className="flex-1 bg-[#d4d4d4]" />
        </div>
      </div>
      <div className="flex h-1.5 shrink-0 overflow-hidden text-[18px] leading-4">
        <span className="flex-1" />
        <span className="h-6 w-[117px] border-l border-[#888] pl-[6px]">Default</span>
        <span className="h-6 w-[167px] border-l border-[#888]" />
        <span className="h-6 w-[126px] border-l border-[#888]" />
      </div>
      <BrandOverlay />
    </div>
  );
}
